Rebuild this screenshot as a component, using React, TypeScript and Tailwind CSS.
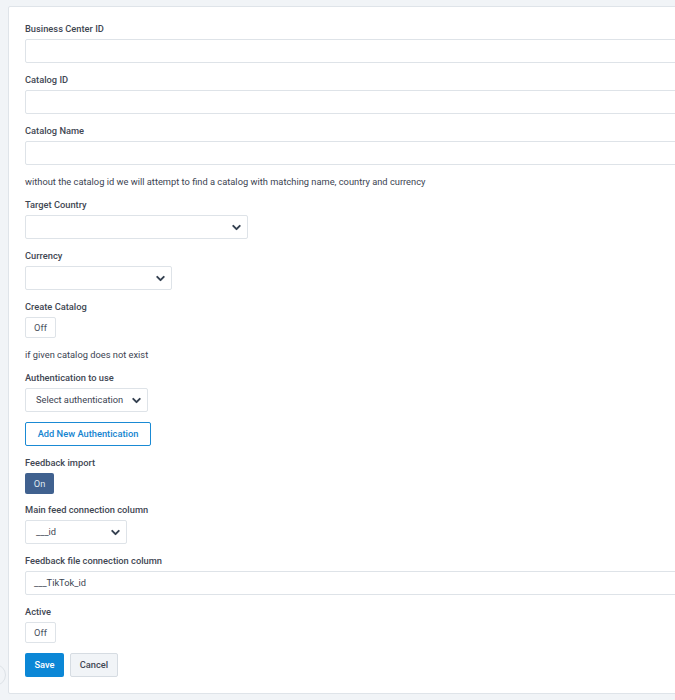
import { ChevronDown } from "lucide-react";

const Label = ({ children }: { children: React.ReactNode }) => (
  <div className="text-[9.3px] leading-[13px] font-medium text-[#3f4753] mb-[4px]">{children}</div>
);

const TextInput = ({ value }: { value?: string }) => (
  <div className="h-[24px] w-full border border-[#dee3e8] rounded-[2px] bg-white flex items-center px-[8px] text-[9.3px] text-[#3b4452] mb-[10px]">
    {value}
  </div>
);

const Select = ({ width, value }: { width: string; value?: string }) => (
  <div
    className={`${width} h-[24px] border border-[#dee3e8] rounded-[2px] bg-white flex items-center justify-between pl-[10px] pr-[4px] text-[9.3px] text-[#3b4452] mb-[10px]`}
  >
    <span>{value}</span>
    <ChevronDown className="w-[13px] h-[13px] text-[#344050]" strokeWidth={3.6} />
  </div>
);

const Toggle = ({ on }: { on?: boolean }) =>
  on ? (
    <div className="w-[29px] h-[21px] rounded-[2px] bg-[#40618f] text-[#dfe7f0] text-[9.3px] flex items-center justify-center mb-[9px]">
      On
    </div>
  ) : (
    <div className="w-[31px] h-[21px] rounded-[2px] border border-[#dee3e8] bg-white text-[#4a5260] text-[9.3px] flex items-center justify-center mb-[10px]">
      Off
    </div>
  );

const Help = ({ children }: { children: React.ReactNode }) => (
  <p className="text-[9.3px] leading-[12px] text-[#3b4452] mt-[1px] mb-[10px]">{children}</p>
);

export default function App() {
  return (
    <div
      className="relative w-[675px] h-[700px] overflow-hidden bg-[#f1f4f7] pt-[6px] pl-[8px]"
      style={{ fontFamily: "Roboto, 'Liberation Sans', sans-serif" }}
    >
      <div className="absolute left-[-16px] top-[664px] w-[22px] h-[22px] rounded-full border border-[#dde2e7] bg-[#f1f4f7]" />
      <div className="relative w-[700px] h-[688px] bg-white border border-[#dfe4e9] rounded-[2px] pt-[15px] px-[16px] flex flex-col items-start">
        <Label>Business Center ID</Label>
        <TextInput />
        <Label>Catalog ID</Label>
        <TextInput />
        <Label>Catalog Name</Label>
        <TextInput />
        <Help>without the catalog id we will attempt to find a catalog with matching name, country and currency</Help>

        <Label>Target Country</Label>
        <Select width="w-[223px]" />
        <Label>Currency</Label>
        <Select width="w-[147px]" />

        <Label>Create Catalog</Label>
        <Toggle />
        <Help>if given catalog does not exist</Help>

        <Label>Authentication to use</Label>
        <Select width="w-[123px]" value="Select authentication" />
        <button className="h-[24px] w-[126px] border border-[#1a8ad4] rounded-[2px] bg-white text-[#1584d0] text-[9.3px] font-medium mb-[10px] block">
          Add New Authentication
        </button>

        <Label>Feedback import</Label>
        <Toggle on />

        <Label>Main feed connection column</Label>
        <Select width="w-[102px]" value="___id" />
        <Label>Feedback file connection column</Label>
        <TextInput value="___TikTok_id" />

        <Label>Active</Label>
        <Toggle />

        <div className="flex gap-[6px]">
          <button className="h-[24px] w-[39px] rounded-[2px] bg-[#0b87d6] text-white text-[9.3px] font-medium">Save</button>
          <button className="h-[24px] w-[48px] rounded-[2px] bg-[#f1f4f7] border border-[#d6dce2] text-[#3f4753] text-[9.3px] font-medium">
            Cancel
          </button>
        </div>
      </div>
    </div>
  );
}
